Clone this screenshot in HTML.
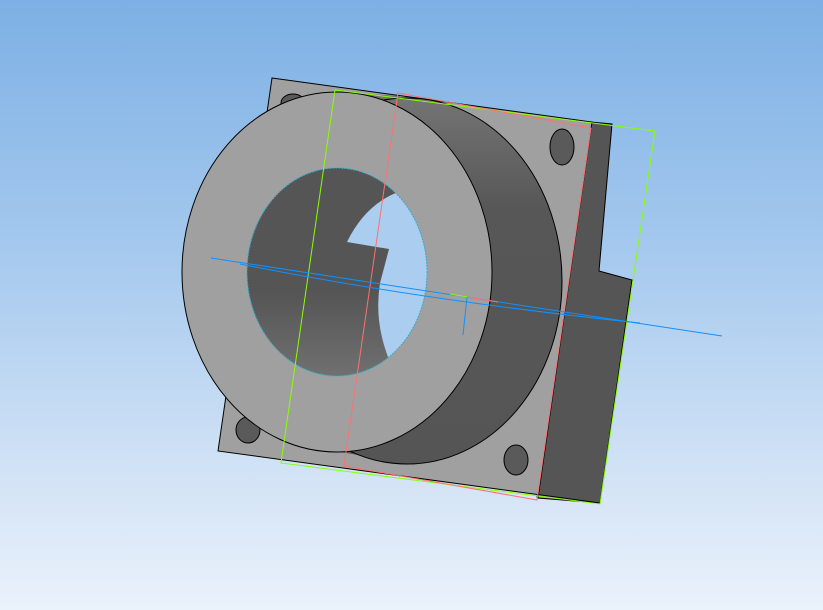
<!DOCTYPE html>
<html><head><meta charset="utf-8"><style>
html,body{margin:0;padding:0;width:823px;height:610px;overflow:hidden}
body{background:linear-gradient(#7db0e4 0%,#a4c8ee 40%,#cfe1f5 75%,#eaf2fb 100%)}
svg{position:absolute;left:0;top:0}
</style></head><body>
<svg width="823" height="610" viewBox="0 0 823 610">
<defs>
<linearGradient id="dg" x1="0" y1="0" x2="0" y2="1"><stop offset="0" stop-color="#747474"/><stop offset="0.3" stop-color="#575757"/><stop offset="1" stop-color="#555"/></linearGradient>
<linearGradient id="ig" x1="0" y1="0" x2="0" y2="1"><stop offset="0" stop-color="#555"/><stop offset="0.6" stop-color="#555"/><stop offset="1" stop-color="#707070"/></linearGradient>
<clipPath id="hc"><ellipse cx="337" cy="272" rx="90" ry="104"/></clipPath>
</defs>
<!-- dark side -->
<polygon points="590,122 612,124 599,271 632,280 600,503 537,497" fill="#555" stroke="#000" stroke-width="1"/>
<!-- plate -->
<polygon points="272,78 592,122 538,498 600,503 218,451" fill="#a0a0a0" stroke="#000" stroke-width="1"/>
<!-- plate holes -->
<ellipse cx="562" cy="147" rx="12" ry="18" fill="#5a5a5a" stroke="#000"/>
<ellipse cx="516" cy="460" rx="12" ry="15" fill="#5a5a5a" stroke="#000"/>
<ellipse cx="293" cy="103" rx="12" ry="9" fill="#5a5a5a" stroke="#000"/>
<ellipse cx="248" cy="430" rx="12" ry="13" fill="#5a5a5a" stroke="#000"/>
<!-- ring back -->
<polygon points="330,92 400,96 407,463 340,452" fill="url(#dg)"/>
<ellipse cx="407" cy="281" rx="155" ry="183" fill="url(#dg)" stroke="#000"/>
<!-- ring front -->
<ellipse cx="337" cy="272" rx="155" ry="180" fill="#a0a0a0" stroke="#000"/>
<ellipse cx="337" cy="272" rx="90" ry="104" fill="url(#ig)" stroke="#2ab0d0" stroke-dasharray="1.5 1.5"/>
<path clip-path="url(#hc)" d="M398,192 L430,200 L440,272 L430,365 L388,357 Q374,320 380,283 L389,249 L347,242 Q365,205 398,192 Z" fill="#abcdf0"/>
<ellipse cx="337" cy="272" rx="90" ry="104" fill="none" stroke="#2ab0d0" stroke-dasharray="1.5 1.5"/>
<!-- construction lines -->
<polygon points="335,90 655,131 600,504 281,463" fill="none" stroke="#88ff00" stroke-width="1"/>
<polygon points="398,93 591,128 537,500 344,466" fill="none" stroke="#ff7070" stroke-width="1"/>
<line x1="211" y1="258" x2="722" y2="336" stroke="#1090ff" stroke-width="1"/>
<path d="M240,264 Q420,300 640,323" fill="none" stroke="#1090ff" stroke-width="1"/>
<line x1="467" y1="297" x2="463" y2="335" stroke="#1090ff" stroke-width="1"/>
<line x1="467" y1="297" x2="498" y2="302" stroke="#ff7070" stroke-width="1"/>
<line x1="450" y1="294" x2="467" y2="297" stroke="#88ff00" stroke-width="1"/>
</svg>
</body></html>
